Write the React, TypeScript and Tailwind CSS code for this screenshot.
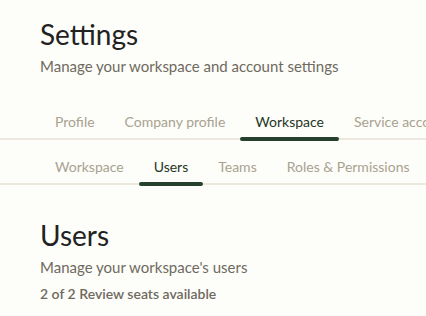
const font = { fontFamily: 'Lato, "Noto Sans", sans-serif' };

function Tabs({ items, active }: { items: string[]; active: string }) {
  return (
    <div className="flex border-b-2 border-[#ece8de] pl-10 whitespace-nowrap">
      {items.map((t) => (
        <div
          key={t}
          className={`relative px-[15px] pb-[8px] text-[14px] leading-[16px] ${t === active ? 'text-[#1f3525]' : 'text-[#a8a290]'}`}
        >
          {t}
          {t === active && <div className="absolute -bottom-[3px] left-0 right-0 h-[4px] rounded-full bg-[#25402c]" />}
        </div>
      ))}
    </div>
  );
}

export default function App() {
  return (
    <div className="h-[316px] w-[426px] overflow-hidden bg-[#fdfdf9]" style={font}>
      <div className="px-10 pt-[17px]">
        <h1 className="text-[28px] leading-[34px] text-[#222]">Settings</h1>
        <p className="mt-[6px] text-[15px] leading-[18px] text-[#6f6a5f]">Manage your workspace and account settings</p>
      </div>
      <div className="mt-[39px]">
        <Tabs items={['Profile', 'Company profile', 'Workspace', 'Service accounts']} active="Workspace" />
        <div className="mt-[19px]">
          <Tabs items={['Workspace', 'Users', 'Teams', 'Roles & Permissions']} active="Users" />
        </div>
      </div>
      <div className="px-10 pt-[34px]">
        <h2 className="text-[28px] leading-[32px] text-[#222]">Users</h2>
        <p className="mt-[7px] text-[15px] leading-[18px] text-[#6f6a5f]">Manage your workspace's users</p>
        <p className="mt-[10px] text-[14px] font-semibold leading-[16px] text-[#6f6a5f]">2 of 2 Review seats available</p>
      </div>
    </div>
  );
}
